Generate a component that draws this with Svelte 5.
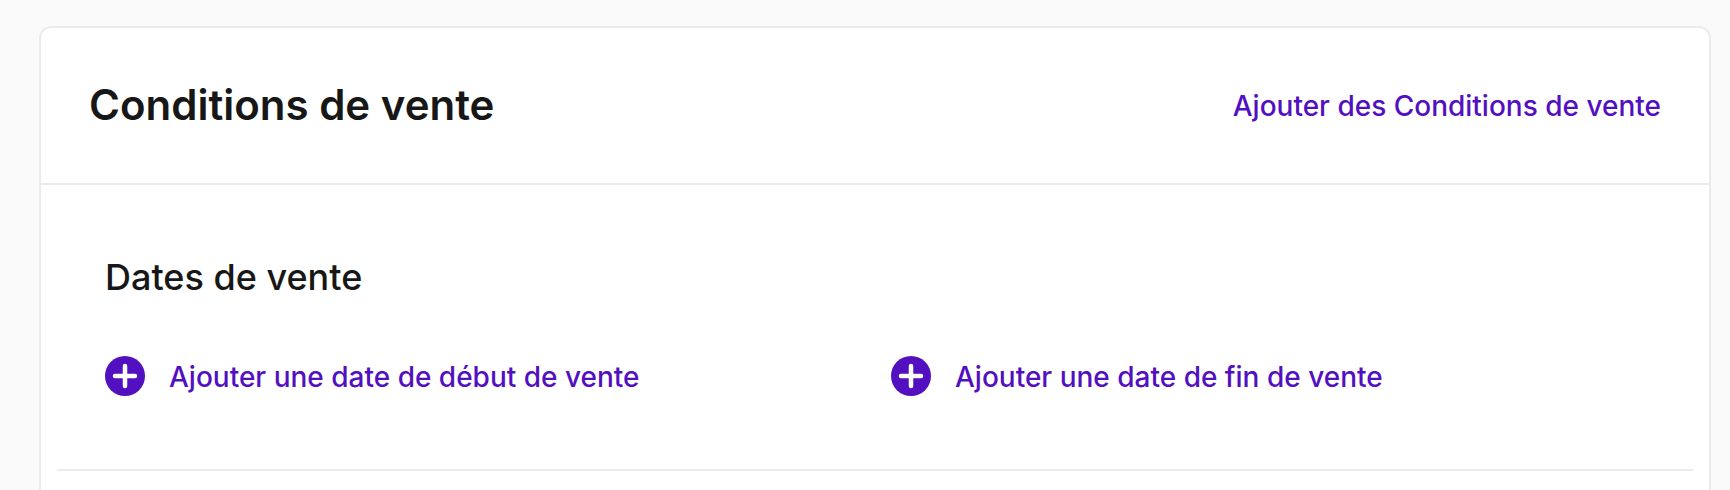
<script>
  const dates = ['Ajouter une date de début de vente', 'Ajouter une date de fin de vente'];
</script>

<div class="page">
  <section class="card">
    <header class="card-header">
      <h2>Conditions de vente</h2>
      <a href="#terms" class="link">Ajouter des Conditions de vente</a>
    </header>
    <div class="card-body">
      <div class="group">
        <h3>Dates de vente</h3>
        <div class="date-grid">
          {#each dates as label}
            <a href="#date" class="add-date">
              <svg viewBox="0 0 40 40" width="40" height="40" aria-hidden="true">
                <circle cx="20" cy="20" r="20" fill="#5310c1" />
                <path d="M20 10v20M10 20h20" stroke="#fff" stroke-width="4.5" stroke-linecap="round" />
              </svg>
              <span class="link label">{label}</span>
            </a>
          {/each}
        </div>
      </div>
      <hr />
    </div>
  </section>
</div>

<style>
  :global(body) {
    margin: 0;
    background: #fafafa;
    font-family: Inter, "Liberation Sans", sans-serif;
  }

  .page {
    height: 490px;
    box-sizing: border-box;
    padding: 26px 19px 0 39px;
    overflow: hidden;
  }

  .card {
    background: #fff;
    border: 2px solid #ebebeb;
    border-bottom: 0;
    border-radius: 12px 12px 0 0;
    height: 464px;
  }

  .card-header {
    height: 157px;
    box-sizing: border-box;
    padding: 0 48px;
    display: flex;
    align-items: center;
    justify-content: space-between;
    border-bottom: 2px solid #ebebeb;
  }

  h2 {
    margin: 0;
    padding-bottom: 2px;
    font-size: 42px;
    font-weight: 600;
    color: #171717;
  }

  .link {
    font-size: 28px;
    font-weight: 500;
    color: #5310c1;
    text-decoration: none;
  }

  .label {
    padding-top: 2px;
  }

  .card-body {
    padding: 0 16px;
  }

  .group {
    padding: 71px 0 0 48px;
    height: 284px;
    box-sizing: border-box;
  }

  h3 {
    margin: 0;
    font-size: 36px;
    font-weight: 500;
    line-height: 42px;
    color: #171717;
  }

  .date-grid {
    display: grid;
    grid-template-columns: 786px 1fr;
    margin-top: 58px;
  }

  .add-date {
    display: flex;
    align-items: center;
    gap: 24px;
    text-decoration: none;
  }

  hr {
    margin: 0;
    border: 0;
    border-top: 2px solid #ebebeb;
  }
</style>
